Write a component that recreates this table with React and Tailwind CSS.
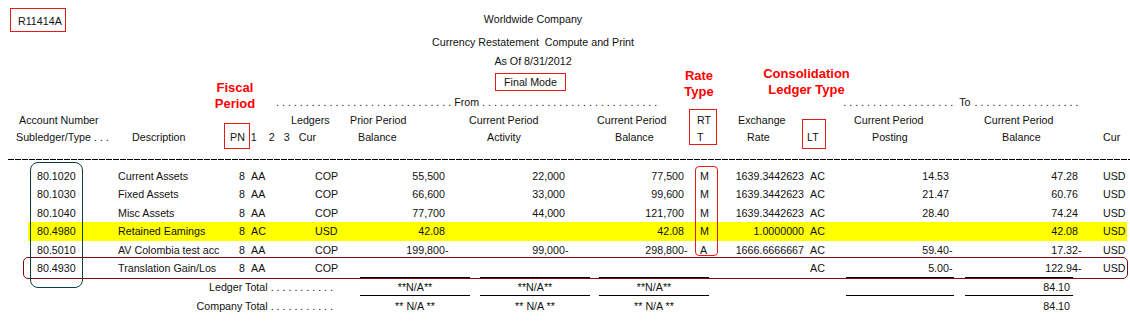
import React from "react";

const HEAD_COLS =
  "grid grid-cols-[112px_116px_17px_55px_50px_95px_120px_119px_46px_74px_56px_89px_129px_52px]";
const DATA_COLS =
  "grid grid-cols-[84px_116px_17px_55px_50px_95px_120px_119px_46px_74px_56px_89px_129px_49px]";
const TOTAL_COLS =
  "grid grid-cols-[360px_110px_10px_110px_9px_110px_137px_108px_11px_108px_57px]";

const rows = [
  { acct: "80.1020", desc: "Current Assets", pn: "8", lt: "AA", cur: "COP", prior: "55,500", act: "22,000", bal: "77,500", rt: "M", rate: "1639.3442623", clt: "AC", post: "14.53", tbal: "47.28", tcur: "USD" },
  { acct: "80.1030", desc: "Fixed Assets", pn: "8", lt: "AA", cur: "COP", prior: "66,600", act: "33,000", bal: "99,600", rt: "M", rate: "1639.3442623", clt: "AC", post: "21.47", tbal: "60.76", tcur: "USD" },
  { acct: "80.1040", desc: "Misc Assets", pn: "8", lt: "AA", cur: "COP", prior: "77,700", act: "44,000", bal: "121,700", rt: "M", rate: "1639.3442623", clt: "AC", post: "28.40", tbal: "74.24", tcur: "USD" },
  { acct: "80.4980", desc: "Retained Eamings", pn: "8", lt: "AC", cur: "USD", prior: "42.08", act: "", bal: "42.08", rt: "M", rate: "1.0000000", clt: "AC", post: "", tbal: "42.08", tcur: "USD", highlight: true },
  { acct: "80.5010", desc: "AV Colombia test acc", pn: "8", lt: "AA", cur: "COP", prior: "199,800-", act: "99,000-", bal: "298,800-", rt: "A", rate: "1666.6666667", clt: "AC", post: "59.40-", tbal: "17.32-", tcur: "USD" },
  { acct: "80.4930", desc: "Translation Gain/Los", pn: "8", lt: "AA", cur: "COP", prior: "", act: "", bal: "", rt: "", rate: "", clt: "AC", post: "5.00-", tbal: "122.94-", tcur: "USD" },
];

function Num({ v }) {
  if (!v) return null;
  if (v.endsWith("-")) {
    return (
      <>
        {v.slice(0, -1)}
        <span className="-mr-[3.5px]">-</span>
      </>
    );
  }
  return <>{v}</>;
}

const dots = (n) => Array(n).fill(". ").join("");
const dotsAfter = (n) => Array(n).fill(" .").join("");

function DataRow({ r }) {
  return (
    <div
      className={`${DATA_COLS} ml-[28px] w-[1099px] h-[18.4px] leading-[18.4px] whitespace-nowrap ${
        r.highlight ? "bg-[#ffff00]" : ""
      }`}
    >
      <div className="pl-[9px]">{r.acct}</div>
      <div className="pl-[6px]">{r.desc}</div>
      <div className="text-right">{r.pn}</div>
      <div className="pl-[6px]">{r.lt}</div>
      <div className="pl-[15px]">{r.cur}</div>
      <div className="text-right"><Num v={r.prior} /></div>
      <div className="text-right"><Num v={r.act} /></div>
      <div className="text-right"><Num v={r.bal} /></div>
      <div className="pl-[16px]">{r.rt}</div>
      <div className="text-right">{r.rate}</div>
      <div className="pl-[6px]">{r.clt}</div>
      <div className="text-right"><Num v={r.post} /></div>
      <div className="text-right"><Num v={r.tbal} /></div>
      <div className="pl-[25px]">{r.tcur}</div>
    </div>
  );
}

function Rules() {
  return (
    <div className={`${TOTAL_COLS} h-px`}>
      <div />
      <div className="bg-black" />
      <div />
      <div className="bg-black" />
      <div />
      <div className="bg-black" />
      <div />
      <div className="bg-black" />
      <div />
      <div className="bg-black" />
      <div />
    </div>
  );
}

function TotalRow({ label, na, total, h }) {
  return (
    <div className={`${TOTAL_COLS} ${h} items-center whitespace-nowrap`}>
      <div className="text-right pr-[27px]">{label}</div>
      <div className="text-center">{na}</div>
      <div />
      <div className="text-center">{na}</div>
      <div />
      <div className="text-center">{na}</div>
      <div />
      <div />
      <div />
      <div className="text-right pr-[3px]">{total}</div>
      <div />
    </div>
  );
}

export default function App() {
  return (
    <div className="relative w-[1130px] h-[322px] overflow-hidden bg-white text-[10.7px] text-[#111] font-['Liberation_Sans',Arial,sans-serif]">
      {/* report title */}
      <div className="grid">
        <div className="col-start-1 row-start-1 pl-[10px] pt-[8px]">
          <span className="inline-block border border-[#e81818] pl-[7px] pr-[3px] pt-[2px] leading-[20px]">
            R11414A
          </span>
        </div>
        <div className="col-start-1 row-start-1 flex flex-col items-center pr-[64px] pt-[10px] whitespace-nowrap">
          <div className="h-[19px] leading-[19px]">Worldwide Company</div>
          <div className="mt-[4px] h-[19px] leading-[19px]">Currency Restatement&nbsp; Compute and Print</div>
          <div className="h-[19px] leading-[19px]">As Of 8/31/2012</div>
          <div className="mt-[2px] mr-[5px] h-[18px] border border-[#e81818] px-[8px] leading-[16px]">Final Mode</div>
        </div>
      </div>

      {/* From / To */}
      <div className="mt-[2px] flex h-[18px] items-center whitespace-nowrap leading-[18px]">
        <span className="ml-[276px]">{dots(30)}From{dotsAfter(30)}</span>
        <span className="ml-[186px] w-[116px] overflow-hidden">{dots(19)}</span>
        <span>To</span>
        <span className="ml-[4px]">{dotsAfter(18)}</span>
      </div>

      {/* column headings */}
      <div className={`${HEAD_COLS} mt-[1px] h-[17px] leading-[17px] whitespace-nowrap`}>
        <div className="pl-[19px]">Account Number</div>
        <div />
        <div className="col-span-3 pl-[63px]">Ledgers</div>
        <div className="pl-0">Prior Period</div>
        <div className="pl-[24px]">Current Period</div>
        <div className="pl-[32px]">Current Period</div>
        <div className="pl-[13px]">RT</div>
        <div className="pl-[8px]">Exchange</div>
        <div className="col-span-2 pl-[50px]">Current Period</div>
        <div className="pl-[35px]">Current Period</div>
        <div />
      </div>
      <div className={`${HEAD_COLS} h-[17px] leading-[17px] whitespace-nowrap`}>
        <div className="pl-[16px]">Subledger/Type . . .</div>
        <div className="pl-[20px]">Description</div>
        <div className="col-span-3 flex pl-[2px]">
          <span>PN</span>
          <span className="ml-[6px]">1</span>
          <span className="ml-[12px]">2</span>
          <span className="ml-[9px]">3</span>
          <span className="ml-[9px]">Cur</span>
        </div>
        <div className="pl-[8px]">Balance</div>
        <div className="pl-[42px]">Activity</div>
        <div className="pl-[50px]">Balance</div>
        <div className="pl-[13px]">T</div>
        <div className="pl-[17px]">Rate</div>
        <div className="pl-[3px]">LT</div>
        <div className="pl-[12px]">Posting</div>
        <div className="pl-[53px]">Balance</div>
        <div className="pl-[25px]">Cur</div>
      </div>

      <div className="ml-[8px] mt-[13px] h-px bg-[repeating-linear-gradient(90deg,#000_0px,#000_6px,transparent_6px,transparent_7px)]" />

      {/* detail lines */}
      <div className="mt-[7px]">
        {rows.map((r) => (
          <DataRow key={r.acct} r={r} />
        ))}
      </div>

      <Rules />
      <TotalRow label="Ledger Total . . . . . . . . . . ." na="**N/A**" total="84.10" h="h-[17px]" />
      <Rules />
      <TotalRow label="Company Total . . . . . . . . . . ." na="** N/A **" total="84.10" h="h-[20px]" />

      {/* annotations */}
      <div className="absolute left-[205px] top-[80px] w-[60px] text-center text-[13px] font-bold leading-[16px] text-[#ff0000]">
        Fiscal
        <br />
        Period
      </div>
      <div className="absolute left-[669px] top-[68px] w-[60px] text-center text-[13px] font-bold leading-[16px] text-[#ff0000]">
        Rate
        <br />
        Type
      </div>
      <div className="absolute left-[756px] top-[66px] w-[101px] text-center text-[13px] font-bold leading-[16px] text-[#ff0000]">
        Consolidation
        <br />
        Ledger Type
      </div>

      <div className="absolute left-[224px] top-[123px] h-[26px] w-[26px] border border-[#e81818]" />
      <div className="absolute left-[689px] top-[109px] h-[36px] w-[28px] border border-[#e81818]" />
      <div className="absolute left-[802px] top-[119px] h-[30px] w-[24px] border border-[#e81818]" />
      <div className="absolute left-[695px] top-[166px] h-[90px] w-[23px] rounded-[4px] border border-[#e81818]" />

      <div className="absolute left-[23px] top-[257px] h-[22px] w-[1105px] rounded-[5px] border border-[#7a0c0c]" />
      <div className="absolute left-[30px] top-[162px] h-[126px] w-[53px] rounded-[8px] border border-[#0f3f3d]" />
    </div>
  );
}
